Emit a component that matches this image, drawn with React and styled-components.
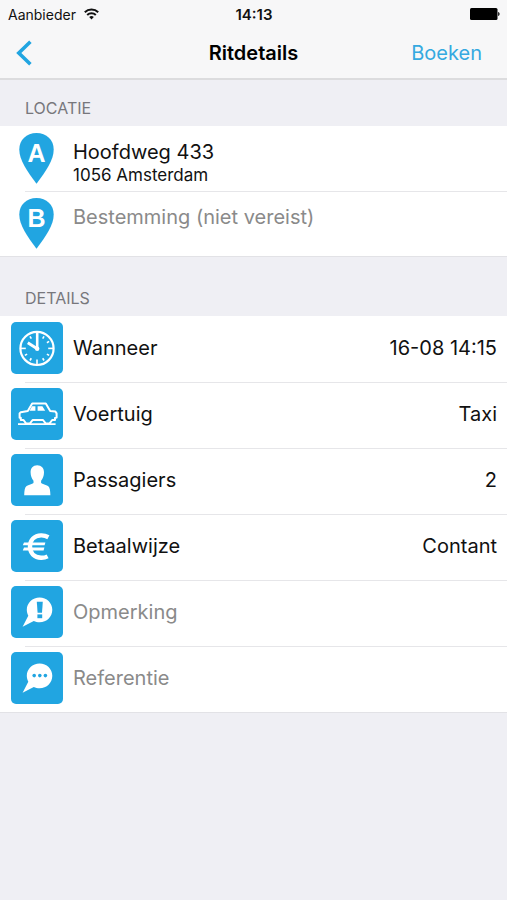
import React, { useState } from "react";
import styled, { createGlobalStyle } from "styled-components";

const blue = "#21a5e1";

export default function App() {
  const [remark, setRemark] = useState("");
  const [reference, setReference] = useState("");

  return (
    <Page>
      <GlobalStyle />
      <TopBar>
        <StatusBar>
          <Carrier>
            Aanbieder
            <WifiIcon />
          </Carrier>
          <Time>14:13</Time>
          <Battery>
            <BatteryIcon />
          </Battery>
        </StatusBar>
        <NavBar>
          <BackButton type="button" aria-label="Terug">
            <BackIcon />
          </BackButton>
          <Title>Ritdetails</Title>
          <BookButton type="button">Boeken</BookButton>
        </NavBar>
      </TopBar>

      <main>
        <SectionTitle $top={18}>LOCATIE</SectionTitle>
        <List>
          <Item>
            <LocationButton type="button">
              <Pin letter="A" />
              <Address>
                <Street>Hoofdweg 433</Street>
                <City>1056 Amsterdam</City>
              </Address>
            </LocationButton>
          </Item>
          <Item>
            <LocationButton type="button">
              <Pin letter="B" />
              <Address>
                <Street $muted>Bestemming (niet vereist)</Street>
              </Address>
            </LocationButton>
          </Item>
        </List>

        <SectionTitle $top={31}>DETAILS</SectionTitle>
        <List>
          <DetailItem icon={<ClockIcon />} label="Wanneer" value="16-08 14:15" />
          <DetailItem icon={<CarIcon />} label="Voertuig" value="Taxi" />
          <DetailItem icon={<PersonIcon />} label="Passagiers" value="2" />
          <DetailItem icon={<EuroIcon />} label="Betaalwijze" value="Contant" />
          <Item>
            <FieldRow>
              <Tile>
                <RemarkIcon />
              </Tile>
              <Field
                aria-label="Opmerking"
                placeholder="Opmerking"
                value={remark}
                onChange={(e) => setRemark(e.target.value)}
              />
            </FieldRow>
          </Item>
          <Item>
            <FieldRow>
              <Tile>
                <ReferenceIcon />
              </Tile>
              <Field
                aria-label="Referentie"
                placeholder="Referentie"
                value={reference}
                onChange={(e) => setReference(e.target.value)}
              />
            </FieldRow>
          </Item>
        </List>
      </main>
    </Page>
  );
}

function DetailItem({ icon, label, value }) {
  return (
    <Item>
      <DetailButton type="button">
        <Tile>{icon}</Tile>
        <Label>{label}</Label>
        <Value>{value}</Value>
      </DetailButton>
    </Item>
  );
}

function Pin({ letter }) {
  return (
    <PinSvg width="35" height="51" viewBox="0 0 35 51">
      <path
        d="M17.5 0C7.4 0 .3 7 .3 16.4c0 10.4 7.6 21.4 17.2 34.4 9.6-13 17.2-24 17.2-34.4C34.7 7 27.6 0 17.5 0z"
        fill={blue}
      />
      <text x="17.5" y="29" textAnchor="middle">
        {letter}
      </text>
    </PinSvg>
  );
}

function WifiIcon() {
  return (
    <svg width="15" height="12" viewBox="0 0 15 12" fill="none" stroke="#111" strokeWidth="2">
      <path d="M.8 4.2a9.6 9.6 0 0 1 13.4 0" />
      <path d="M3.2 7a6.2 6.2 0 0 1 8.600 0" />
      <path d="M7.500 11.600 5.200 9.100a3.400 3.400 0 0 1 4.600 0z" fill="#111" stroke="none" />
    </svg>
  );
}

function BatteryIcon() {
  return (
    <svg width="30" height="12" viewBox="0 0 30 12">
      <rect x="0" y="0" width="27.5" height="12" rx="1.5" fill="#000" />
      <path d="M28.2 4c1.800.5 1.800 3.500 0 4z" fill="#000" />
    </svg>
  );
}

function BackIcon() {
  return (
    <svg width="17" height="26" viewBox="0 0 17 26" fill="none" stroke={blue} strokeWidth="3.6">
      <path d="M14.4 1.8 2.8 13l11.600 11.200" />
    </svg>
  );
}

function ClockIcon() {
  const ticks = [30, 60, 90, 120, 150, 180, 210, 240, 270, 330];
  return (
    <svg width="52" height="52" viewBox="0 0 52 52" fill="none" stroke="#fff">
      <circle cx="26" cy="26.400" r="16.600" strokeWidth="2.200" />
      {ticks.map((angle) => (
        <path
          key={angle}
          d={angle % 90 ? "M26 12.400v2.600" : "M26 10.400v4.800"}
          strokeWidth="1.600"
          transform={`rotate(${angle} 26 26.400)`}
        />
      ))}
      <path d="M26.200 10.500v16.500" strokeWidth="2.600" />
      <path d="M16.800 20.800l9.400 6" strokeWidth="3" />
      <circle cx="26.200" cy="26.800" r="2.200" fill="#fff" stroke="none" />
    </svg>
  );
}

function CarIcon() {
  return (
    <svg width="52" height="52" viewBox="0 0 52 52" fill="none" stroke="#fff" strokeWidth="2">
      <path
        d="M12.500 32H9.800v-2.200H8.600v-4.400l1.200-1.200 7-1.200 4.400-7.400h13.600l4.400 7.400 5.200.6 1.200 1.800v4.200l-1.600.4V32h-2.800l-2.600 3.400h-4L32 32H21.600l-2.600 3.400h-4z"
        strokeLinejoin="round"
      />
      <path d="M18.600 22.800l2.400-4.600h3.400v4.600zM26.600 18.200h4.800l2.800 4.600h-7.600z" fill="#fff" stroke="none" />
      <path d="M7 36.200h14M21 36.200h23.600" strokeWidth="1.800" />
    </svg>
  );
}

function PersonIcon() {
  return (
    <svg width="52" height="52" viewBox="0 0 52 52" fill="#fff">
      <path d="M26.200 11.300c-4.200 0-6.700 3-6.600 7.200.1 3.400 1.100 6.200 2.900 8.200v2.300c-1.200 1.300-5.100 1.900-6.900 3-1.800 1.200-2.300 4.300-2.400 9.300h26.200c-.1-5-.6-8.100-2.400-9.300-1.800-1.100-5.700-1.700-6.900-3v-2.300c1.800-2 2.800-4.800 2.900-8.200.1-4.200-2.600-7.200-6.800-7.200z" />
    </svg>
  );
}

function EuroIcon() {
  return (
    <svg width="52" height="52" viewBox="0 0 52 52" fill="none" stroke="#fff">
      <path
        d="M37.400 17.200c-2.400-1.300-4.900-1.900-7.400-1.800-6.500.3-11 4.600-11 11.200 0 6.700 4.500 11 11 11.200 2.500.1 4.400-.3 6.600-1.400"
        strokeWidth="4.400"
      />
      <path
        d="M13 22.400h21.400l-.8 2.800H11.800zM13 27.600h20.400l-.8 2.800H11.800z"
        fill="#fff"
        stroke="none"
      />
    </svg>
  );
}

const bubble =
  "M28.600 11.400c-7 0-12.800 5.400-12.800 12.400 0 2.200.5 4.100 1.500 5.900L11.600 40.800l11.200-5.900c1.700.9 3.700 1.400 5.800 1.400 7.100 0 12.700-5.500 12.700-12.500s-5.600-12.400-12.700-12.400z";

function RemarkIcon() {
  return (
    <svg width="52" height="52" viewBox="0 0 52 52">
      <path d={bubble} fill="#fff" />
      <path d="M25.800 15.800h6l-.8 11h-4.400z" fill={blue} />
      <rect x="26.400" y="28.400" width="4.800" height="3.800" fill={blue} />
    </svg>
  );
}

function ReferenceIcon() {
  return (
    <svg width="52" height="52" viewBox="0 0 52 52">
      <path d={bubble} fill="#fff" />
      <g fill={blue}>
        <circle cx="23.200" cy="23.600" r="1.800" />
        <circle cx="28.800" cy="23.600" r="1.800" />
        <circle cx="34.400" cy="23.600" r="1.800" />
      </g>
    </svg>
  );
}

const GlobalStyle = createGlobalStyle`
  * {
    box-sizing: border-box;
  }
  body {
    margin: 0;
    background: #efeff4;
    color: #111;
    font-family: Inter, "Liberation Sans", sans-serif;
  }
  button {
    padding: 0;
    border: 0;
    background: none;
    color: inherit;
    font: inherit;
    text-align: left;
    cursor: pointer;
  }
  svg {
    display: block;
    flex: none;
  }
`;

const Page = styled.div`
  min-height: 100vh;
`;

const TopBar = styled.header`
  background: #f7f7f8;
  border-bottom: 2px solid #dcdcde;
`;

const StatusBar = styled.div`
  display: grid;
  grid-template-columns: 1fr auto 1fr;
  align-items: center;
  height: 28px;
  padding: 0 7px 0 8px;
  font-size: 14px;
`;

const Carrier = styled.div`
  display: flex;
  align-items: center;
  gap: 8px;
`;

const Time = styled.time`
  font-size: 15px;
  font-weight: 600;
`;

const Battery = styled.div`
  justify-self: end;
`;

const NavBar = styled.nav`
  display: grid;
  grid-template-columns: 1fr auto 1fr;
  align-items: center;
  height: 50px;
  padding: 0 16px;
`;

const BackButton = styled.button`
  justify-self: start;
`;

const Title = styled.h1`
  margin: 0;
  color: #000;
  font-size: 20px;
  font-weight: 600;
`;

const BookButton = styled.button`
  && {
    justify-self: end;
    margin-right: 9px;
    color: #35a9e0;
    font-size: 20px;
  }
`;

const SectionTitle = styled.h2`
  margin: 0;
  padding: ${(props) => props.$top}px 25px 8px;
  color: #77777c;
  font-size: 16px;
  font-weight: 400;
  line-height: 20px;
`;

const List = styled.ul`
  margin: 0;
  padding: 0;
  background: #fff;
  border-bottom: 1px solid #e2e2e6;
  list-style: none;
`;

const Item = styled.li`
  & + &::before {
    content: "";
    display: block;
    height: 1px;
    margin: 0 0 -1px 25px;
    background: #e6e6e9;
  }
`;

const LocationButton = styled.button`
  display: flex;
  align-items: flex-start;
  gap: 19px;
  width: 100%;
  height: 65px;
  && {
    padding: 7px 10px 0 19px;
  }
`;

const PinSvg = styled.svg`
  text {
    fill: #fff;
    font-family: "Liberation Sans", sans-serif;
    font-size: 25px;
    font-weight: 700;
  }
`;

const Address = styled.span`
  display: flex;
  flex-direction: column;
  padding-top: 7px;
`;

const Street = styled.span`
  color: ${(props) => (props.$muted ? "#8a8a8a" : "inherit")};
  font-size: 20px;
  line-height: 24px;
`;

const City = styled.span`
  font-size: 17px;
  line-height: 22px;
`;

const DetailButton = styled.button`
  display: flex;
  align-items: center;
  gap: 10px;
  width: 100%;
  height: 66px;
  && {
    padding: 0 10px 2px 11px;
  }
`;

const FieldRow = styled.label`
  display: flex;
  align-items: center;
  gap: 10px;
  height: 66px;
  padding: 0 10px 2px 11px;
`;

const Tile = styled.span`
  flex: none;
  border-radius: 5px;
  background: ${blue};
`;

const Label = styled.span`
  font-size: 20px;
`;

const Value = styled.span`
  margin-left: auto;
  font-size: 20px;
`;

const Field = styled.input`
  flex: 1;
  min-width: 0;
  padding: 0;
  border: 0;
  outline: 0;
  background: none;
  color: inherit;
  font: inherit;
  font-size: 20px;

  &::placeholder {
    color: #8a8a8a;
    opacity: 1;
  }
`;
